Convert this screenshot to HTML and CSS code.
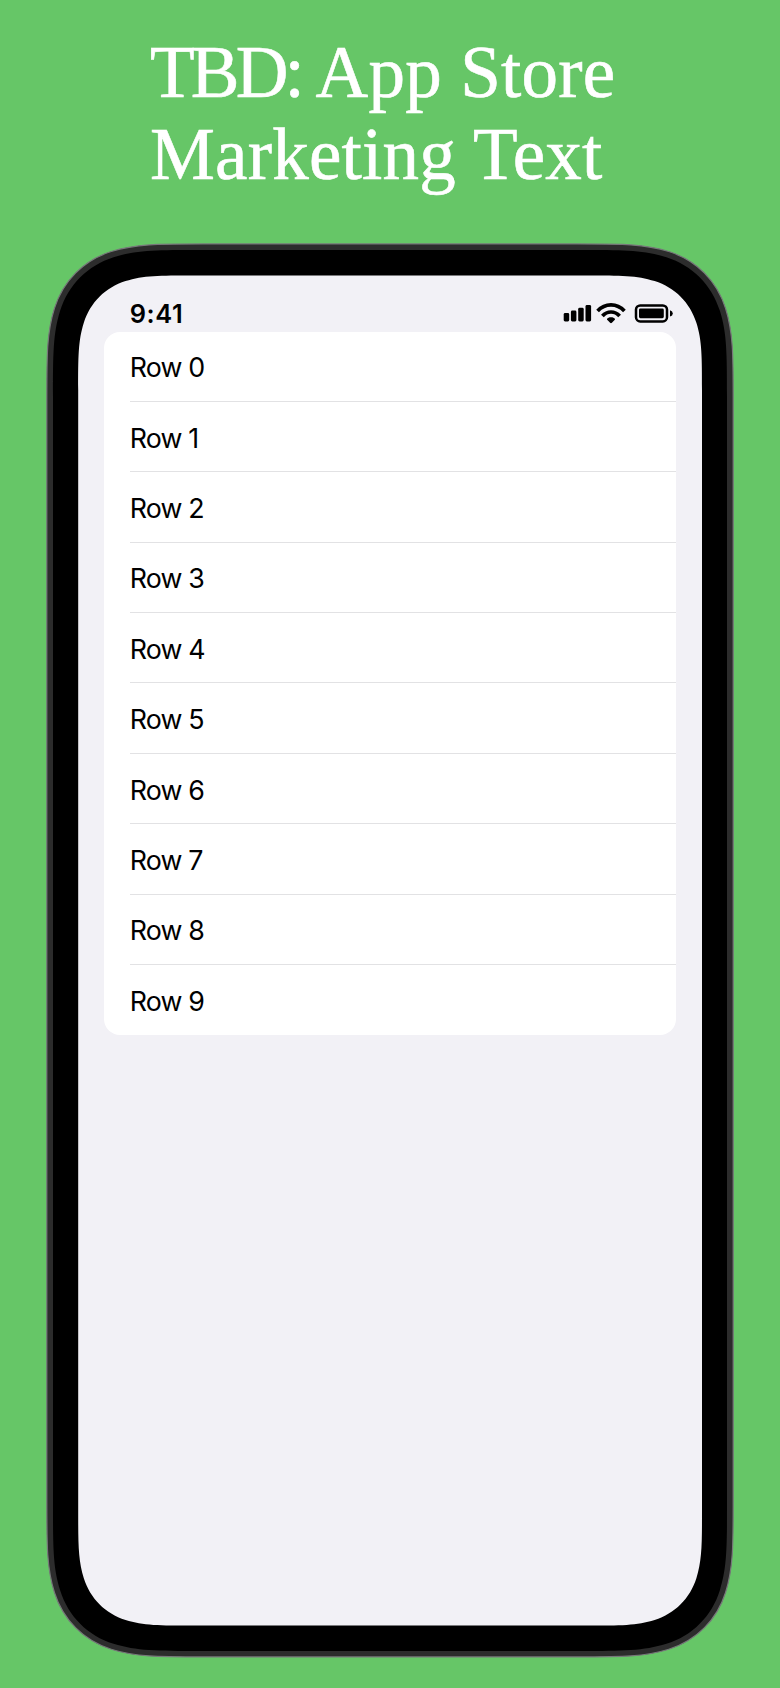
FILE: index.html
```html
<!DOCTYPE html>
<html lang="en">
<head>
<meta charset="utf-8">
<title>App Store Marketing</title>
<link rel="stylesheet" href="styles.css">
</head>
<body>
<main class="poster">
  <h1 class="headline"><span class="line"><span class="tight">TBD:</span> App Store</span><span class="line">Marketing Text</span></h1>
  <section class="phone">
    <svg class="bezel" viewBox="46 243 688 1415" aria-hidden="true">
      <path fill="#2c2c2c" stroke="#77777a" stroke-width="1.2" d="M202.72 243.9H577.28c44.9 0 67.35 0 91.51 7.64c27.54 8.71 48.06 29.23 56.77 56.77c7.64 24.16 7.64 46.61 7.64 91.51V1500.98c0 44.9 0 67.35-7.64 91.51c-8.71 27.54-29.23 48.06-56.77 56.77c-24.16 7.64-46.61 7.64-91.51 7.64H202.72c-44.9 0-67.35 0-91.51-7.64c-27.54-8.71-48.06-29.23-56.77-56.77c-7.64-24.16-7.64-46.61-7.64-91.51V399.82c0-44.9 0-67.35 7.64-91.51c8.71-27.54 29.23-48.06 56.77-56.77c24.16-7.64 46.61-7.64 91.51-7.64z"/>
      <path fill="#000" d="M199.75 250H580.25c42.26 0 63.39 0 86.13 7.19c25.92 8.2 45.24 27.51 53.43 53.43c7.19 22.74 7.19 43.87 7.19 86.13V1504.25c0 42.26 0 63.39-7.19 86.13c-8.2 25.92-27.51 45.24-53.43 53.43c-22.74 7.19-43.87 7.19-86.13 7.19H199.75c-42.26 0-63.39 0-86.13-7.19c-25.92-8.2-45.24-27.51-53.43-53.43c-7.19-22.74-7.19-43.87-7.19-86.13V396.75c0-42.26 0-63.39 7.19-86.13c8.2-25.92 27.51-45.24 53.43-53.43c22.74-7.19 43.87-7.19 86.13-7.19z"/>
      <path fill="#f2f1f6" d="M192.85 275.5H587.35c33.01 0 49.52 0 67.29 5.62c20.25 6.41 35.34 21.5 41.74 41.74c5.62 17.77 5.62 34.28 5.62 67.29V1510.85c0 33.01 0 49.52-5.62 67.29c-6.41 20.25-21.5 35.34-41.74 41.74c-17.77 5.62-34.28 5.62-67.29 5.62H192.85c-33.01 0-49.52 0-67.29-5.62c-20.25-6.41-35.34-21.5-41.74-41.74c-5.62-17.77-5.62-34.28-5.62-67.29V390.15c0-33.01 0-49.52 5.62-67.29c6.41-20.25 21.5-35.34 41.74-41.74c17.77-5.62 34.28-5.62 67.29-5.62z"/>
    </svg>
    <div class="screen">
      <header class="status">
        <span class="time">9:41</span>
        <svg class="indicators" viewBox="562 300 114 26" role="img" aria-label="Signal, Wi-Fi, battery">
          <g>
            <rect x="563.7" y="313" width="5.5" height="8.5" rx="1.4"/>
            <rect x="570.9" y="310.6" width="5.5" height="10.9" rx="1.4"/>
            <rect x="578.2" y="307.8" width="5.5" height="13.7" rx="1.4"/>
            <rect x="585.5" y="305" width="5.6" height="16.5" rx="1.4"/>
          </g>
          <g fill="none" stroke="#000" stroke-width="3.7">
            <path d="M597.6 310.9Q603.2 304.8 611 304.8T624.4 310.9"/>
            <path d="M602.4 316Q606 312 611 312T619.6 316"/>
          </g>
          <path d="M611 317.2C613 317.2 614.3 317.9 614.9 318.7Q615.3 319.4 614.6 320L611.9 322.8Q611 323.6 610.1 322.8L607.4 320Q606.7 319.4 607.1 318.7C607.7 317.9 609 317.2 611 317.2Z"/>
          <rect x="636" y="305.4" width="31" height="16" rx="4.2" fill="none" stroke="#000" stroke-width="2.5"/>
          <rect x="639" y="308.6" width="24.8" height="9.6" rx="1.4"/>
          <path d="M670 310.2Q672.8 311 672.8 313.4T670 316.6Z"/>
        </svg>
      </header>
      <ul class="rows">
        <li class="row"><span class="label">Row 0</span></li>
        <li class="row"><span class="label">Row 1</span></li>
        <li class="row"><span class="label">Row 2</span></li>
        <li class="row"><span class="label">Row 3</span></li>
        <li class="row"><span class="label">Row 4</span></li>
        <li class="row"><span class="label">Row 5</span></li>
        <li class="row"><span class="label">Row 6</span></li>
        <li class="row"><span class="label">Row 7</span></li>
        <li class="row"><span class="label">Row 8</span></li>
        <li class="row"><span class="label">Row 9</span></li>
      </ul>
    </div>
  </section>
</main>
</body>
</html>
```
FILE: styles.css
```css
* { box-sizing: border-box; }
body { margin: 0; background: #66c667; }
.poster {
  width: 780px;
  height: 1688px;
  padding: 32px 46px 0;
  overflow: hidden;
  background: #66c667;
}
.headline {
  height: 211px;
  margin: 0;
  padding-left: 104px;
  color: #fff;
  font: 400 73px/82px "Liberation Serif", serif;
  letter-spacing: 0.2px;
  white-space: nowrap;
  -webkit-text-stroke: 0.6px #fff;
}
.line { display: block; }
.tight { letter-spacing: -3.8px; }
.phone {
  position: relative;
  width: 688px;
  height: 1415px;
  padding: 32px;
}
.bezel {
  position: absolute;
  inset: 0;
  width: 688px;
  height: 1415px;
}
.screen {
  position: relative;
  padding: 0 25.7px;
  font-family: Inter, sans-serif;
  color: #000;
}
.status {
  display: flex;
  justify-content: space-between;
  align-items: flex-end;
  height: 56.5px;
  padding-left: 26px;
}
.time {
  font-size: 25.4px;
  font-weight: 600;
  line-height: 30px;
  letter-spacing: 0.6px;
  margin-bottom: 3px;
}
.indicators { width: 114px; height: 26px; margin-bottom: 5.5px; }
.rows {
  margin: 0;
  padding: 0;
  list-style: none;
  background: #fff;
  border-radius: 16px;
}
.row { height: 70.4px; padding-left: 26px; }
.label {
  display: flex;
  align-items: center;
  height: 100%;
  padding-top: 2px;
  border-bottom: 1px solid #e2e2e4;
  font-size: 26.8px;
  letter-spacing: -0.85px;
}
.row:last-child .label { border-bottom-color: transparent; }
```
